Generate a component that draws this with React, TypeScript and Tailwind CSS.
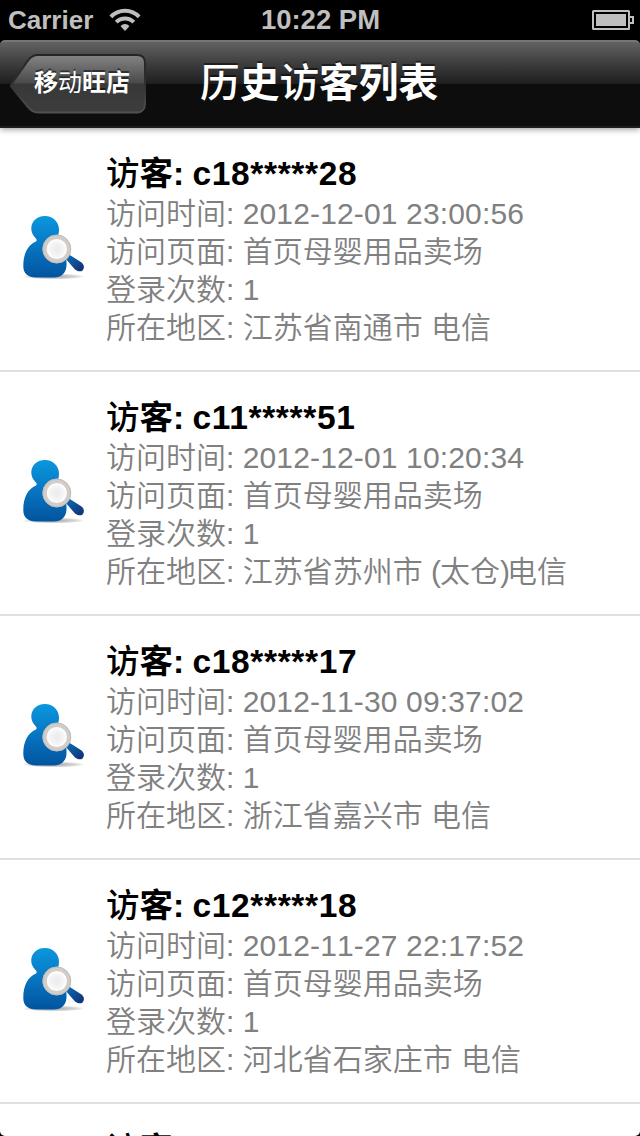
import React from 'react';

interface Visitor {
  name: string;
  time: string;
  page: string;
  count: number;
  area: React.ReactNode;
}

const visitors: Visitor[] = [
  { name: 'c18*****28', time: '2012-12-01 23:00:56', page: '首页母婴用品卖场', count: 1, area: '江苏省南通市 电信' },
  {
    name: 'c11*****51',
    time: '2012-12-01 10:20:34',
    page: '首页母婴用品卖场',
    count: 1,
    area: <>江苏省苏州市 <span className="tracking-[-1px]">(</span>太仓<span className="tracking-[-3px]">)</span>电信</>,
  },
  { name: 'c18*****17', time: '2012-11-30 09:37:02', page: '首页母婴用品卖场', count: 1, area: '浙江省嘉兴市 电信' },
  { name: 'c12*****18', time: '2012-11-27 22:17:52', page: '首页母婴用品卖场', count: 1, area: '河北省石家庄市 电信' },
  { name: 'c15*****60', time: '2012-11-27 20:41:09', page: '首页母婴用品卖场', count: 1, area: '浙江省杭州市 电信' },
];

const WifiIcon: React.FC = () => (
  <svg width="32" height="24" viewBox="0 0 32 24" fill="none" stroke="#bfbfbf" strokeWidth="4">
    <path d="M1.9 8.8C9.5 0.6 22.5 0.6 30.1 8.8" />
    <path d="M7.2 14.2C12 9.2 20 9.2 24.8 14.2" />
    <path d="M11.6 18.3C14 15.2 18 15.2 20.4 18.3L16 23Z" fill="#bfbfbf" stroke="none" />
  </svg>
);

const BatteryIcon: React.FC = () => (
  <svg width="42" height="20" viewBox="0 0 42 20">
    <rect x="1" y="1" width="36" height="18" rx="0.5" fill="none" stroke="#bfbfbf" strokeWidth="2" />
    <rect x="4" y="4" width="30" height="12" fill="#bfbfbf" />
    <path d="M38 7H41V13H38" fill="none" stroke="#bfbfbf" strokeWidth="2" />
  </svg>
);

const VisitorIcon: React.FC = () => (
  <svg width="64" height="66" viewBox="0 0 64 66" className="shrink-0">
    <defs>
      <linearGradient id="body" x1="0" y1="0" x2="0" y2="1">
        <stop offset="0" stopColor="#0a98df" />
        <stop offset="0.45" stopColor="#0878c4" />
        <stop offset="1" stopColor="#02549f" />
      </linearGradient>
      <linearGradient id="handle" x1="0" y1="0" x2="1" y2="1">
        <stop offset="0" stopColor="#0872bb" />
        <stop offset="1" stopColor="#142b70" />
      </linearGradient>
      <radialGradient id="shade">
        <stop offset="0" stopColor="#888" stopOpacity="0.8" />
        <stop offset="0.7" stopColor="#999" stopOpacity="0.4" />
        <stop offset="1" stopColor="#999" stopOpacity="0" />
      </radialGradient>
      <radialGradient id="lens">
        <stop offset="0" stopColor="#ebebeb" />
        <stop offset="0.5" stopColor="#f3f3f3" />
        <stop offset="0.8" stopColor="#fff" />
      </radialGradient>
    </defs>
    <ellipse cx="31.5" cy="61.5" rx="31.5" ry="3" fill="url(#shade)" />
    <path
      d="M23 1C31 1 37 7 37 14.5C37 19 36 22 34 24C41 28 45 39 44.5 50C44.5 58 39 62.5 32 62.5H14C6 62.5 1.3 58.5 1.3 51C1.3 38 6 30 14 26.5C15 25.5 15 24.5 13.5 23C5 14.5 10 1 23 1Z"
      fill="url(#body)"
    />
    <path d="M43 43L47 39.5L59.5 47.5C62.5 50 62.5 53 60.5 55.5C58.5 57 56 56.5 53 54.5Z" fill="url(#handle)" />
    <circle cx="34.8" cy="34" r="12.2" fill="url(#lens)" stroke="#d2cdc9" strokeWidth="4.2" />
    <circle cx="34.8" cy="34" r="14" fill="none" stroke="#bab8b8" strokeWidth="0.8" />
  </svg>
);

const BackButton: React.FC = () => (
  <button className="relative ml-[9px] flex h-[62px] w-[138px] items-center pb-[2px] pl-[25px]">
    <svg width="138" height="62" viewBox="0 0 138 62" className="absolute inset-0">
      <defs>
        <linearGradient id="back" x1="0" y1="0" x2="0" y2="1">
          <stop offset="0" stopColor="#858585" />
          <stop offset="0.49" stopColor="#494949" />
          <stop offset="0.5" stopColor="#383838" />
          <stop offset="1" stopColor="#3d3d3d" />
        </linearGradient>
        <linearGradient id="edge" x1="0" y1="0" x2="0" y2="1">
          <stop offset="0" stopColor="#252525" />
          <stop offset="0.5" stopColor="#303030" />
          <stop offset="1" stopColor="#505050" />
        </linearGradient>
      </defs>
      <path
        d="M29 2H128C133 2 136 5 136 10V51C136 56 133 59.5 128 59.5H29C25 59.5 22 58 19 54L2 33.5V32L19 7.5C22 3.5 25 2 29 2Z"
        fill="url(#back)"
        stroke="url(#edge)"
        strokeWidth="2"
      />
    </svg>
    <span className="relative text-[24px] leading-[30px] font-bold text-white [text-shadow:0_-2px_0_rgba(0,0,0,0.5)]">
      移<span className="font-normal">动</span>旺店
    </span>
  </button>
);

const VisitorRow: React.FC<{ visitor: Visitor }> = ({ visitor }) => (
  <li className="flex h-[244px] shrink-0 items-start border-b-2 border-[#e0e0e0] pl-[22px]">
    <div className="mt-[87px] w-[84px] shrink-0">
      <VisitorIcon />
    </div>
    <div className="pt-[25px] whitespace-nowrap">
      <h2 className="h-[42px] text-[33.5px] leading-[42px] font-bold text-black">
        <span className="font-medium">访</span>客: <span className="-ml-px tracking-[0.65px]">{visitor.name}</span>
      </h2>
      <div className="text-[30px] leading-[38px] font-[350] text-[#808080]">
        <p className="h-[38px]">访问时间: <span className="tracking-[0.15px] [font-kerning:none]">{visitor.time}</span></p>
        <p className="h-[38px]">访问页面: {visitor.page}</p>
        <p className="h-[38px]">登录次数: {visitor.count}</p>
        <p className="h-[38px]">所在地区: {visitor.area}</p>
      </div>
    </div>
  </li>
);

export default function App() {
  return (
    <div className="h-[1136px] w-[640px] overflow-hidden bg-black font-['Liberation_Sans','Noto_Sans_CJK_SC',sans-serif]">
      <div className="flex h-full flex-col overflow-hidden rounded-b-[5px]">
        {/* Status bar */}
        <div className="grid h-10 shrink-0 grid-cols-3 items-center bg-black text-[26px] leading-10 font-bold text-[#bfbfbf]">
          <div className="flex items-center gap-4 pl-2">
            <span>Carrier</span>
            <WifiIcon />
          </div>
          <span className="pl-px text-center text-[27.5px] whitespace-nowrap">10:22 PM</span>
          <div className="flex justify-end pr-[6px]">
            <BatteryIcon />
          </div>
        </div>

        {/* Navigation bar */}
        <header className="relative z-10 flex h-[88px] shrink-0 items-center rounded-t-[5px] border-t-2 border-b-2 border-t-[#777] border-b-[#1f1c1c] bg-linear-to-b from-[#626262] from-0% via-[#1e1e1e] via-50% to-[#0d0d0d] to-50% shadow-[0_1px_6px_rgba(0,0,0,0.45)]">
          <BackButton />
          <h1 className="ml-[53px] pb-[2px] text-[39.7px] leading-[50px] font-bold whitespace-nowrap text-white [text-shadow:0_-2px_0_rgba(0,0,0,0.5)]">
            <span className="font-medium">历</span>史<span className="font-medium">访</span>客列表
          </h1>
        </header>

        {/* Visitor list */}
        <ul className="min-h-0 flex-1 overflow-hidden bg-white">
          {visitors.map((visitor, idx) => (
            <VisitorRow key={idx} visitor={visitor} />
          ))}
        </ul>
      </div>
    </div>
  );
}
